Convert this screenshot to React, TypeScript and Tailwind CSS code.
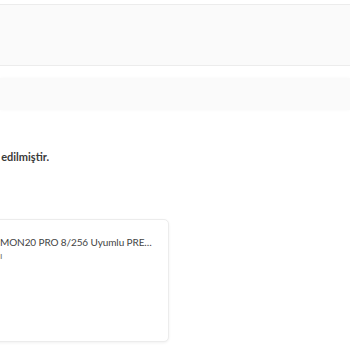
export default function App() {
  return (
    <div
      className="w-[350px] h-[350px] overflow-hidden bg-white text-[#333]"
      style={{ fontFamily: 'Lato, "Noto Sans", sans-serif' }}
    >
      {/* Header band */}
      <div className="mt-[4px] h-[62px] border-y border-[#ececec] bg-[#fafafa]" />

      {/* Status band */}
      <div className="mt-[12px] h-[32px] bg-[#fafafa] shadow-[0_0_3px_rgba(0,0,0,0.03)]" />

      {/* Delivered message, cut on the left */}
      <div className="mt-[40px] flex w-[49px] justify-end overflow-hidden whitespace-nowrap">
        <span className="text-[11px] font-bold leading-[14px] text-[#3a3a3a]">
          Siparişiniz teslim edilmiştir.
        </span>
      </div>

      {/* Product card */}
      <div className="mt-[55px] -ml-[12px] h-[123px] w-[181px] rounded-[5px] border border-[#ececec] bg-white px-[12px] pt-[16px] shadow-[0_1px_3px_rgba(0,0,0,0.06)]">
        <p className="-ml-[1px] truncate text-[10px] leading-[13px] tracking-[-0.1px] text-[#444]">
          MON20 PRO 8/256 Uyumlu PREMIUM Silikon Kılıf
        </p>
        <p className="-ml-[1px] text-[10px] leading-[13px] text-[#777]">ı</p>
      </div>
    </div>
  );
}
